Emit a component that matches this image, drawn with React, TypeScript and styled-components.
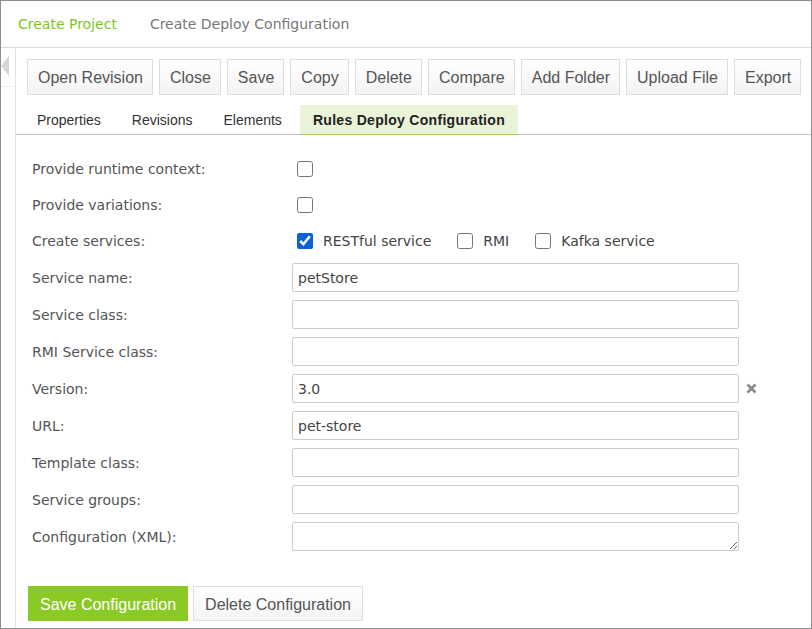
import React from "react";
import styled, { createGlobalStyle } from "styled-components";

const Global = createGlobalStyle`
  html, body { margin: 0; padding: 0; background: #fff; }
  * { box-sizing: border-box; }
`;

const Frame = styled.div`
  width: 812px;
  height: 629px;
  border: 1px solid #8c8c8c;
  display: flex;
  flex-direction: column;
  overflow: hidden;
  font-family: "DejaVu Sans", Verdana, sans-serif;
  font-size: 14px;
  color: #555;
`;

const Header = styled.div`
  height: 47px;
  flex: none;
  display: flex;
  align-items: center;
  gap: 33px;
  padding: 0 0 1px 17px;
  border-bottom: 1px solid #dcdcdc;
`;

const Crumb = styled.span<{ $active?: boolean }>`
  font-size: 14px;
  color: ${(p) => (p.$active ? "#7dc41f" : "#777")};
`;

const Body = styled.div`
  flex: 1;
  display: flex;
  min-height: 0;
`;

const Sidebar = styled.div`
  width: 15px;
  flex: none;
  border-right: 1px solid #e2e2e2;
`;

const SidebarHead = styled.div`
  height: 39px;
  border-bottom: 1px solid #eeeeee;
  display: flex;
  align-items: center;
`;

const Arrow = styled.div`
  width: 0;
  height: 0;
  border-top: 10px solid transparent;
  border-bottom: 10px solid transparent;
  border-right: 8px solid #d6d6d6;
  margin-top: -2px;
`;

const Main = styled.div`
  flex: 1;
  display: flex;
  flex-direction: column;
  min-width: 0;
`;

const Toolbar = styled.div`
  display: flex;
  gap: 6px;
  padding: 11px 0 0 11px;
`;

const ToolButton = styled.button`
  flex: none;
  white-space: nowrap;
  height: 36px;
  padding: 2px 9px 0 10px;
  border: 1px solid #dedede;
  border-radius: 0;
  background: linear-gradient(#ffffff, #f3f3f3);
  font-family: "Liberation Sans", Arial, sans-serif;
  font-size: 16px;
  color: #555;
  cursor: pointer;
`;

const TabBar = styled.div`
  display: flex;
  gap: 5px;
  margin-top: 10px;
  padding-left: 8px;
  border-bottom: 1px solid #c4c4c4;
`;

const Tab = styled.div<{ $active?: boolean }>`
  height: 30px;
  display: flex;
  align-items: center;
  padding: 0 13px;
  white-space: nowrap;
  font-family: "Liberation Sans", Arial, sans-serif;
  font-size: 14px;
  font-weight: ${(p) => (p.$active ? 700 : 400)};
  letter-spacing: ${(p) => (p.$active ? "0.3px" : "0")};
  color: ${(p) => (p.$active ? "#222" : "#333")};
  background: ${(p) => (p.$active ? "#e8f3d8" : "transparent")};
  box-shadow: ${(p) => (p.$active ? "inset 0 -1px 0 #a6d163" : "none")};
  margin-bottom: -1px;
`;

const Form = styled.div`
  display: flex;
  flex-direction: column;
  gap: 8px;
  padding: 20px 0 0 16px;
`;

const Row = styled.div<{ $tight?: boolean }>`
  display: flex;
  align-items: center;
  min-height: ${(p) => (p.$tight ? "28px" : "29px")};
`;

const Label = styled.div`
  width: 260px;
  flex: none;
  color: #555;
`;

const Field = styled.div`
  display: flex;
  align-items: center;
`;

const Check = styled.input.attrs({ type: "checkbox" })`
  width: 16px;
  height: 16px;
  margin: 0 0 0 5px;
  accent-color: #0b62d8;
`;

const CheckItem = styled.label`
  display: flex;
  align-items: center;
  gap: 10px;
  margin-right: 26px;
  color: #444;
  &:not(:first-child) > input { margin-left: 0; }
`;

const TextInput = styled.input`
  width: 447px;
  height: 29px;
  border: 1px solid #cccccc;
  border-radius: 2px;
  padding: 0 5px;
  font-family: "DejaVu Sans", Verdana, sans-serif;
  font-size: 14px;
  color: #444;
  outline: none;
`;

const TextArea = styled.textarea`
  width: 447px;
  height: 29px;
  border: 1px solid #cccccc;
  border-radius: 2px;
  padding: 4px 5px;
  font-family: "DejaVu Sans", Verdana, sans-serif;
  font-size: 14px;
  resize: both;
  display: block;
  outline: none;
`;

const ClearIcon = styled.svg`
  margin-left: 7px;
  width: 11px;
  height: 11px;
`;

const Actions = styled.div`
  display: flex;
  gap: 5px;
  margin-top: 27px;
  margin-left: -4px;
`;

const ActionButton = styled.button<{ $primary?: boolean }>`
  white-space: nowrap;
  height: 35px;
  padding: 2px 11px 0;
  border: 1px solid ${(p) => (p.$primary ? "#8bc924" : "#dedede")};
  border-radius: 0;
  background: ${(p) => (p.$primary ? "#8bc924" : "linear-gradient(#ffffff, #f4f4f4)")};
  color: ${(p) => (p.$primary ? "#fff" : "#555")};
  font-family: "Liberation Sans", Arial, sans-serif;
  font-size: 16px;
  cursor: pointer;
`;

const toolbar = ["Open Revision", "Close", "Save", "Copy", "Delete", "Compare", "Add Folder", "Upload File", "Export"];
const tabs = ["Properties", "Revisions", "Elements", "Rules Deploy Configuration"];

const textRows: { label: string; value?: string; clear?: boolean }[] = [
  { label: "Service name:", value: "petStore" },
  { label: "Service class:" },
  { label: "RMI Service class:" },
  { label: "Version:", value: "3.0", clear: true },
  { label: "URL:", value: "pet-store" },
  { label: "Template class:" },
  { label: "Service groups:" },
];

export default function App() {
  return (
    <>
      <Global />
      <Frame>
        <Header>
          <Crumb $active>Create Project</Crumb>
          <Crumb>Create Deploy Configuration</Crumb>
        </Header>
        <Body>
          <Sidebar>
            <SidebarHead>
              <Arrow />
            </SidebarHead>
          </Sidebar>
          <Main>
            <Toolbar>
              {toolbar.map((t) => (
                <ToolButton key={t}>{t}</ToolButton>
              ))}
            </Toolbar>
            <TabBar>
              {tabs.map((t, i) => (
                <Tab key={t} $active={i === 3}>
                  {t}
                </Tab>
              ))}
            </TabBar>
            <Form>
              <Row $tight>
                <Label>Provide runtime context:</Label>
                <Field>
                  <Check />
                </Field>
              </Row>
              <Row $tight>
                <Label>Provide variations:</Label>
                <Field>
                  <Check />
                </Field>
              </Row>
              <Row $tight>
                <Label>Create services:</Label>
                <Field>
                  <CheckItem>
                    <Check defaultChecked />
                    RESTful service
                  </CheckItem>
                  <CheckItem>
                    <Check />
                    RMI
                  </CheckItem>
                  <CheckItem>
                    <Check />
                    Kafka service
                  </CheckItem>
                </Field>
              </Row>
              {textRows.map((r) => (
                <Row key={r.label}>
                  <Label>{r.label}</Label>
                  <Field>
                    <TextInput defaultValue={r.value ?? ""} />
                    {r.clear && (
                      <ClearIcon viewBox="0 0 11 11">
                        <path d="M1.5 1.5 L9.5 9.5 M9.5 1.5 L1.5 9.5" stroke="#8a8a8a" strokeWidth="2.6" />
                      </ClearIcon>
                    )}
                  </Field>
                </Row>
              ))}
              <Row>
                <Label>Configuration (XML):</Label>
                <Field>
                  <TextArea />
                </Field>
              </Row>
              <Actions>
                <ActionButton $primary>Save Configuration</ActionButton>
                <ActionButton>Delete Configuration</ActionButton>
              </Actions>
            </Form>
          </Main>
        </Body>
      </Frame>
    </>
  );
}
